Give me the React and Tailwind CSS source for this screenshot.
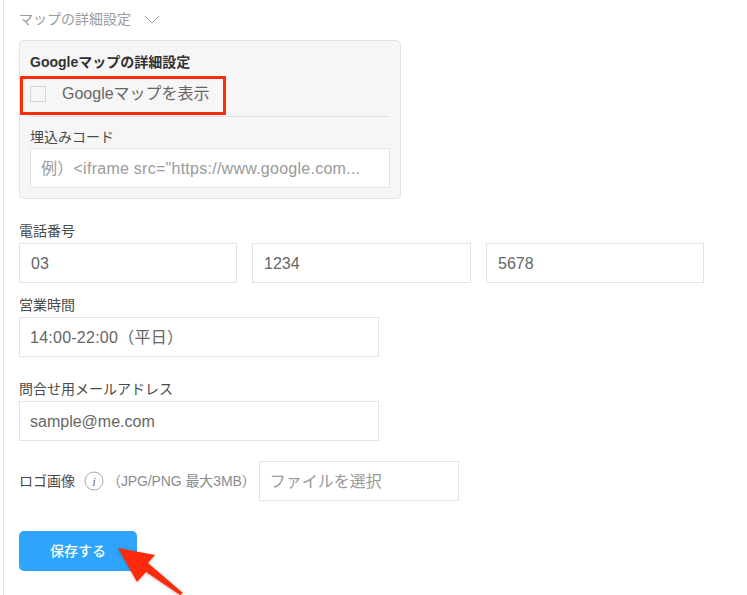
const font = { fontFamily: '"Liberation Sans","Noto Sans CJK JP",sans-serif' };

function Field({ value, className = "", placeholder = false }) {
  return (
    <div className={`h-10 flex items-center border border-[#e3e3e3] bg-white pr-2 pt-[2px] text-[16px] ${placeholder ? "text-[#9a9a9a]" : "text-[#666]"} ${className}`}>
      {value}
    </div>
  );
}

function Label({ children, className = "" }) {
  return <div className={`h-5 flex items-center pt-[1px] text-[14px] text-[#4a4a4a] ${className}`}>{children}</div>;
}

export default function App() {
  return (
    <div style={font} className="relative w-[747px] h-[595px] overflow-hidden bg-white">
      <div className="ml-[3px] h-full border-l border-[#e6e6e6] pl-[15px] pt-[9px]">
        <div className="h-5 flex items-center text-[14px] text-[#9b9b9b]">
          <span>マップの詳細設定</span>
          <svg width="16" height="9" viewBox="0 0 16 9" className="ml-[13px]" fill="none" stroke="#9b9b9b" strokeWidth="1">
            <path d="M1 1l7 7 7-7" />
          </svg>
        </div>

        <div className="mt-[11px] w-[382px] h-[159px] rounded-[5px] border border-[#e2e2e2] bg-[#f6f6f6] px-[10px] pt-[11px]">
          <div className="h-5 flex items-center text-[14px] font-bold text-[#333]">Googleマップの詳細設定</div>
          <div className="h-[44px] flex items-center border-b border-[#e2e2e2] mt-[1px] pb-[1px]">
            <div className="w-4 h-4 border border-[#d6d6d6] bg-[#f6f6f6]" />
            <span className="ml-4 text-[16px] text-[#666]">Googleマップを表示</span>
          </div>
          <Label className="mt-[10px]">埋込みコード</Label>
          <Field value="例）<iframe src=&quot;https://www.google.com..." placeholder className="mt-[1px] pl-[10px] tracking-[0.26px]" />
        </div>

        <Label className="mt-[22px]">電話番号</Label>
        <div className="mt-[2px] flex gap-[15px] w-[685px]">
          <Field value="03" className="w-[218px] pl-[11px]" />
          <Field value="1234" className="w-[219px] pl-[11px]" />
          <Field value="5678" className="w-[218px] pl-[11px]" />
        </div>

        <Label className="mt-3">営業時間</Label>
        <Field value="14:00-22:00（平日）" className="mt-[2px] w-[360px] pl-[10px] tracking-[0.25px]" />

        <Label className="mt-[22px]">問合せ用メールアドレス</Label>
        <Field value="sample@me.com" className="mt-[2px] w-[360px] pl-[10px]" />

        <div className="mt-5 flex items-center">
          <span className="text-[14px] text-[#4a4a4a]">ロゴ画像</span>
          <svg width="20" height="20" viewBox="0 0 20 20" className="ml-[9px]" fill="none">
            <circle cx="10" cy="10" r="9" stroke="#a9a9a9" />
            <text x="10" y="15" textAnchor="middle" fontSize="13" fontStyle="italic" fontFamily="Liberation Serif" fill="#777">i</text>
          </svg>
          <span className="ml-[3px] text-[14px] tracking-[-0.1px] text-[#8c8c8c]">（JPG/PNG 最大3MB）</span>
          <Field value="ファイルを選択" placeholder className="ml-[3px] w-[200px] pl-[10px]" />
        </div>

        <div className="mt-[30px] w-[118px] h-10 rounded-[5px] bg-[#2ea4fa] flex items-center justify-center text-[14px] font-medium text-white">
          保存する
        </div>
      </div>

      <div className="absolute left-[20px] top-[76px] w-[206px] h-[39px] border-[3px] border-[#fb2c08] rounded-[1px]" />

      <svg className="absolute left-0 top-0 pointer-events-none" width="747" height="595" viewBox="0 0 747 595">
        <defs>
          <filter id="s" x="-20%" y="-20%" width="140%" height="140%">
            <feDropShadow dx="0" dy="1" stdDeviation="1.5" floodColor="#000" floodOpacity="0.25" />
          </filter>
        </defs>
        <path d="M118 548L155 555L148 563L183 593L180 595L146 572L137 582Z" fill="#fb2c08" filter="url(#s)" />
      </svg>
    </div>
  );
}
